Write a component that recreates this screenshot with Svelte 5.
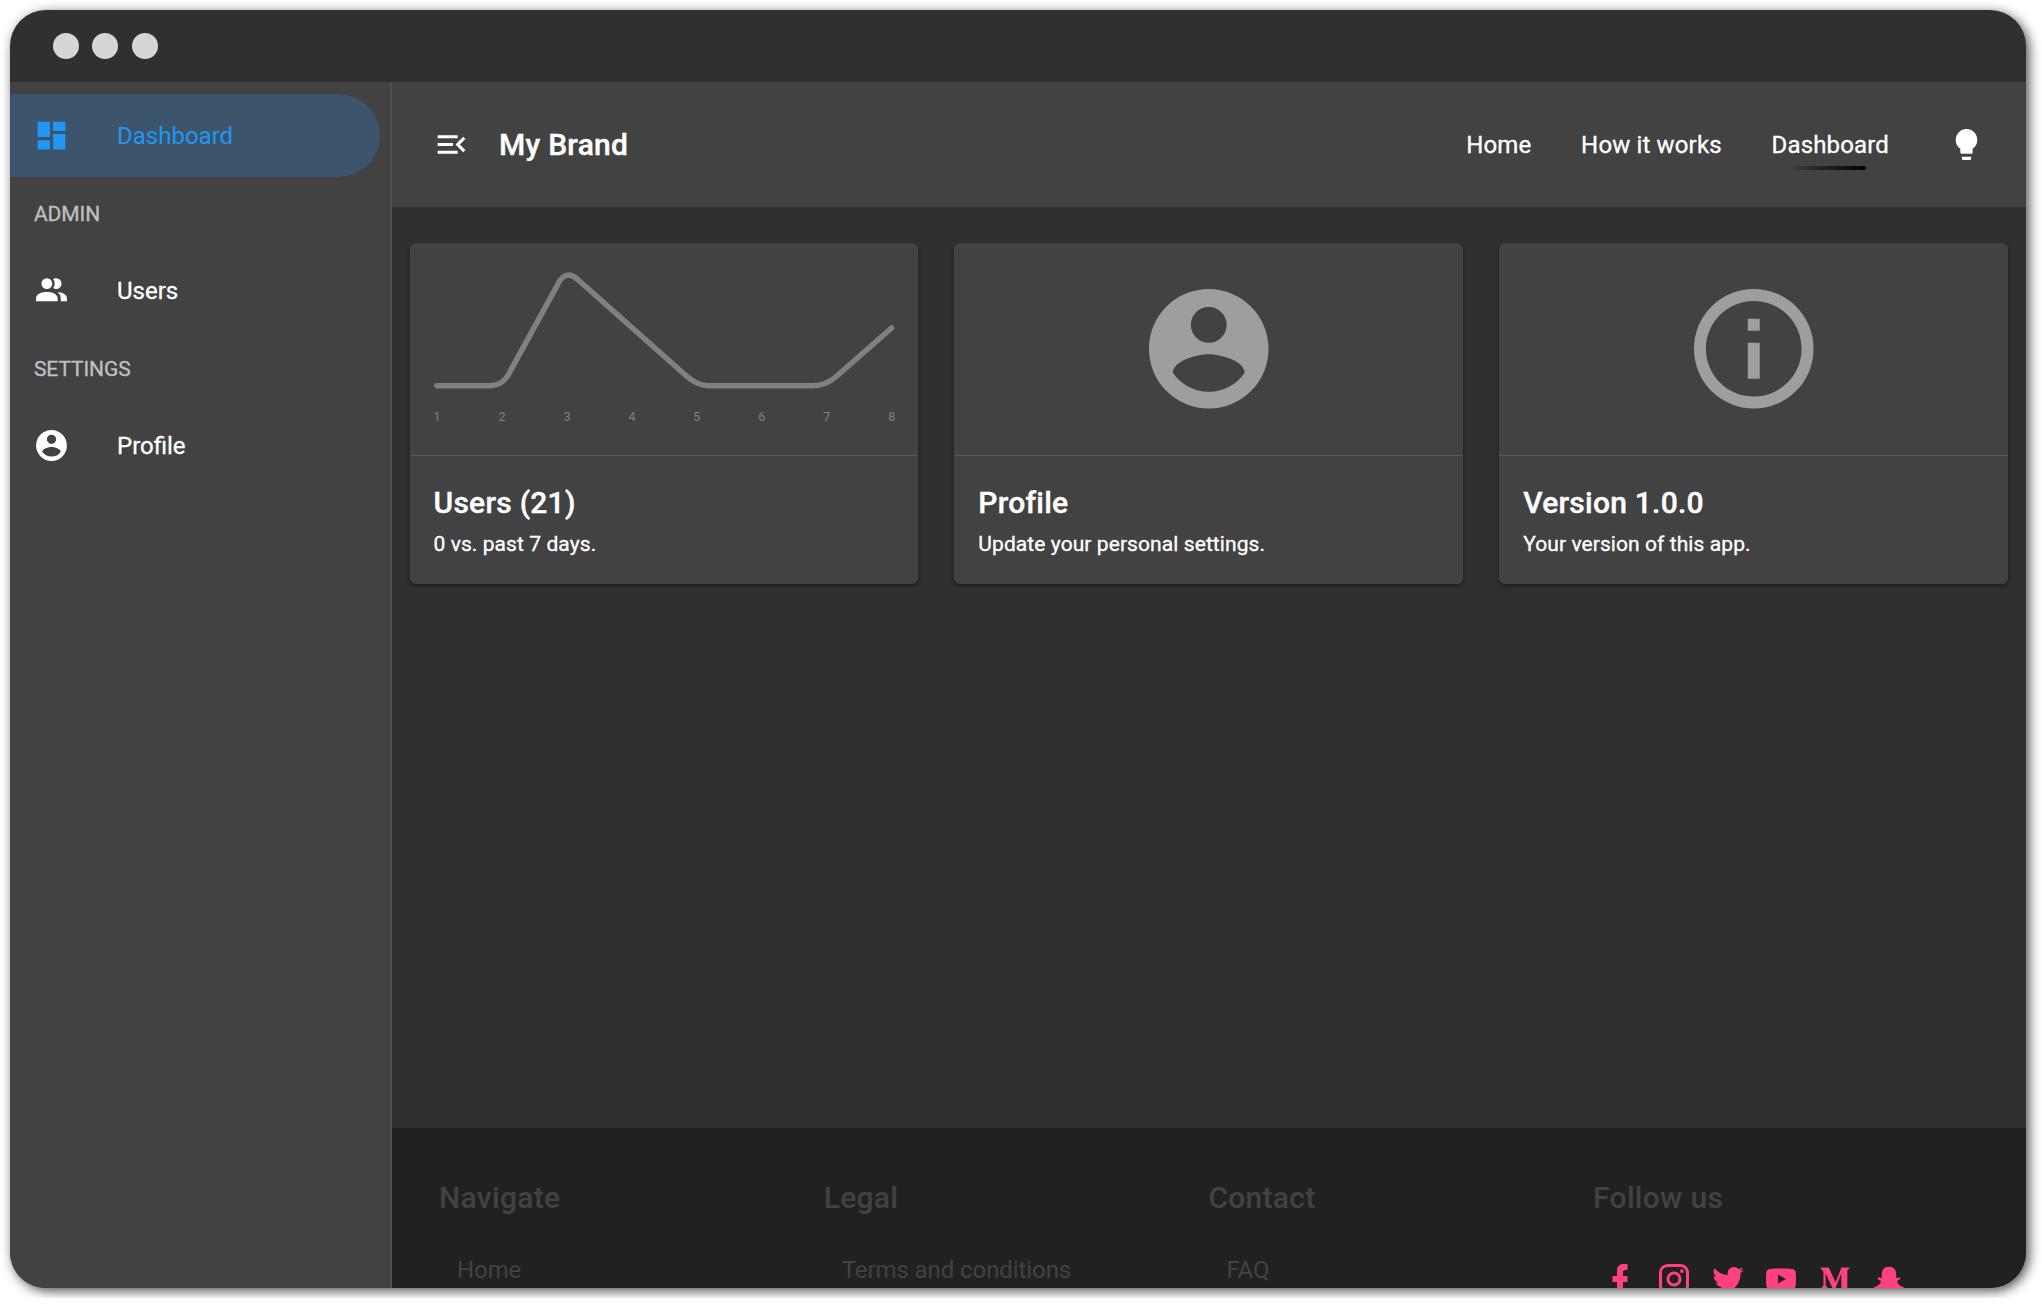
<script>
  const icons = {
    dashboard: 'M13 3v6h8V3m-8 18h8V11h-8M3 21h8v-6H3m0-2h8V3H3v10z',
    users: 'M16 17v2H2v-2s0-4 7-4 7 4 7 4m-3.5-9.5A3.5 3.5 0 1 0 9 11a3.5 3.5 0 0 0 3.5-3.5m3.44 5.5A5.32 5.32 0 0 1 18 17v2h4v-2s0-3.63-6.06-4M15 4a3.39 3.39 0 0 0-1.93.59 5 5 0 0 1 0 5.82A3.39 3.39 0 0 0 15 11a3.5 3.5 0 0 0 0-7z',
    account: 'M12 19.2c-2.5 0-4.71-1.28-6-3.2.03-2 4-3.1 6-3.1s5.97 1.1 6 3.1a7.232 7.232 0 0 1-6 3.2M12 5a3 3 0 0 1 3 3 3 3 0 0 1-3 3 3 3 0 0 1-3-3 3 3 0 0 1 3-3m0-3A10 10 0 0 0 2 12a10 10 0 0 0 10 10 10 10 0 0 0 10-10c0-5.53-4.5-10-10-10z',
    info: 'M11 9h2V7h-2m1 13c-4.41 0-8-3.59-8-8s3.59-8 8-8 8 3.59 8 8-3.59 8-8 8m0-18A10 10 0 0 0 2 12a10 10 0 0 0 10 10 10 10 0 0 0 10-10A10 10 0 0 0 12 2m-1 15h2v-6h-2v6z',
    menuOpen: 'M3 18h13v-2H3v2zM3 6v2h13V6H3zm0 7h10v-2H3v2zm18 2.59L17.42 12 21 8.41 19.59 7l-5 5 5 5L21 15.59z',
    bulb: 'M12 2a7 7 0 0 0-7 7c0 2.38 1.19 4.47 3 5.74V17a1 1 0 0 0 1 1h6a1 1 0 0 0 1-1v-2.26c1.81-1.27 3-3.36 3-5.74a7 7 0 0 0-7-7M9 21a1 1 0 0 0 1 1h4a1 1 0 0 0 1-1v-1H9v1z',
  };

  const sections = [
    { heading: null, items: [{ label: 'Dashboard', icon: icons.dashboard, active: true }] },
    { heading: 'ADMIN', items: [{ label: 'Users', icon: icons.users }] },
    { heading: 'SETTINGS', items: [{ label: 'Profile', icon: icons.account }] },
  ];

  const nav = [
    { label: 'Home' },
    { label: 'How it works' },
    { label: 'Dashboard', active: true },
  ];

  const cards = [
    { title: 'Users (21)', text: '0 vs. past 7 days.', chart: true },
    { title: 'Profile', text: 'Update your personal settings.', icon: icons.account },
    { title: 'Version 1.0.0', text: 'Your version of this app.', icon: icons.info },
  ];

  const days = [1, 2, 3, 4, 5, 6, 7, 8];

  const columns = [
    { title: 'Navigate', link: 'Home' },
    { title: 'Legal', link: 'Terms and conditions' },
    { title: 'Contact', link: 'FAQ' },
  ];

  const socials = [
    { name: 'Facebook', d: 'M17 2v4h-2c-.69 0-1 .81-1 1.5V10h3v4h-3v8h-4v-8H7v-4h3V6a4 4 0 0 1 4-4h3z' },
    { name: 'Instagram', d: 'M7.8,2H16.2C19.4,2 22,4.6 22,7.8V16.2A5.8,5.8 0 0,1 16.2,22H7.8C4.6,22 2,19.4 2,16.2V7.8A5.8,5.8 0 0,1 7.8,2M7.6,4A3.6,3.6 0 0,0 4,7.6V16.4C4,18.39 5.61,20 7.6,20H16.4A3.6,3.6 0 0,0 20,16.4V7.6C20,5.61 18.39,4 16.4,4H7.6M17.25,5.5A1.25,1.25 0 0,1 18.5,6.75A1.25,1.25 0 0,1 17.25,8A1.25,1.25 0 0,1 16,6.75A1.25,1.25 0 0,1 17.25,5.5M12,7A5,5 0 0,1 17,12A5,5 0 0,1 12,17A5,5 0 0,1 7,12A5,5 0 0,1 12,7M12,9A3,3 0 0,0 9,12A3,3 0 0,0 12,15A3,3 0 0,0 15,12A3,3 0 0,0 12,9Z' },
    { name: 'Twitter', d: 'M22.46,6C21.69,6.35 20.86,6.58 20,6.69C20.88,6.16 21.56,5.32 21.88,4.31C21.05,4.81 20.13,5.16 19.16,5.36C18.37,4.5 17.26,4 16,4C13.65,4 11.73,5.92 11.73,8.29C11.73,8.63 11.77,8.96 11.84,9.27C8.28,9.09 5.11,7.38 3,4.79C2.63,5.42 2.42,6.16 2.42,6.94C2.42,8.43 3.17,9.75 4.33,10.5C3.62,10.5 2.96,10.3 2.38,10V10.03C2.38,12.11 3.86,13.85 5.82,14.24C5.46,14.34 5.08,14.39 4.69,14.39C4.42,14.39 4.15,14.36 3.89,14.31C4.43,16 6,17.26 7.89,17.29C6.43,18.45 4.58,19.13 2.56,19.13C2.22,19.13 1.88,19.11 1.54,19.07C3.44,20.29 5.7,21 8.12,21C16,21 20.33,14.46 20.33,8.79C20.33,8.6 20.33,8.42 20.32,8.23C21.16,7.63 21.88,6.87 22.46,6Z' },
    { name: 'YouTube', d: 'M10 9v6l5.3-3L10 9M12 5c3 0 5.6.1 7.4.25 1.4.12 2.2.9 2.4 2.3.15 1.3.2 2.8.2 4.45s-.05 3.150-.2 4.450c-.2 1.4-1 2.180-2.400 2.300C17.600 18.900 15 19 12 19s-5.600-.1-7.400-.25c-1.400-.12-2.200-.9-2.400-2.300C2.050 15.150 2 13.650 2 12s.05-3.150.2-4.450c.2-1.400 1-2.180 2.400-2.300C6.400 5.100 9 5 12 5z' },
    { name: 'Medium', d: 'M2.300 4.300H7.900L12.400 14.300 16.300 4.300H21.700V4.800L20.200 6.300V17.800L21.700 19.300V19.800H14.600V19.300L16.200 17.800V8.400L11.700 19.800H11.100L5.800 8.400V16.200L7.800 18.800V19.800H2.300V18.800L4.300 16.200V7L2.300 4.800V4.300Z' },
    { name: 'Snapchat', d: 'M12 3.900c2.900 0 4.850 1.900 4.850 4.900l-.1 2.300c.6.35 1.200-.15 1.800-.15.600 0 1 .35 1 .75 0 .9-2.100 1-2.100 1.900 0 1.200 2 3.200 4 3.600.400.1.450.5.250.8-.5.750-1.700.85-2.800 1.100-.3.500-.1 1.100-.8 1.100s-1.600-.4-2.800-.1C14.200 20.500 13.500 21.500 12 21.500s-2.200-1-3.300-1.400c-1.200-.3-2.100.1-2.800.1s-.5-.6-.8-1.100c-1.100-.25-2.300-.35-2.800-1.100-.2-.3-.150-.7.250-.8 2-.4 4-2.400 4-3.600 0-.9-2.100-1-2.100-1.900 0-.4.400-.75 1-.75.600 0 1.200.5 1.800.15l-.1-2.300c0-3 1.950-4.900 4.850-4.900z' },
  ];
</script>

<div class="window">
  <div class="titlebar">
    <span class="dot"></span><span class="dot"></span><span class="dot"></span>
  </div>

  <div class="body">
    <aside>
      {#each sections as section}
        {#if section.heading}<h4>{section.heading}</h4>{/if}
        {#each section.items as item}
          <div class="item" class:active={item.active}>
            <svg class="icon" viewBox="0 0 24 24"><path d={item.icon} /></svg>
            <span>{item.label}</span>
          </div>
        {/each}
      {/each}
    </aside>

    <div class="content">
      <header>
        <svg class="icon" viewBox="0 0 24 24"><path d={icons.menuOpen} /></svg>
        <div class="brand">My Brand</div>
        <nav>
          {#each nav as link}
            <span class="link" class:current={link.active}>{link.label}</span>
          {/each}
        </nav>
        <svg class="icon" viewBox="0 0 24 24"><path d={icons.bulb} /></svg>
      </header>

      <main>
        {#each cards as card}
          <section class="card">
            <div class="media">
              {#if card.chart}
                <svg class="chart" viewBox="0 0 509 212">
                  <path d="M27 142.700H79C88 142.700 94.500 139 98.500 131.500L150 37.500C155 30.500 161 30.500 167.500 36.300L276.500 133C284 139.600 290 142.700 299 142.700H403C412 142.700 419.500 139.600 427 133L481.700 85" />
                  {#each days as day, i}
                    <text x={27 + i * 65} y="177.800">{day}</text>
                  {/each}
                </svg>
              {:else}
                <svg class="big" viewBox="0 0 24 24"><path d={card.icon} /></svg>
              {/if}
            </div>
            <div class="info">
              <h2>{card.title}</h2>
              <p>{card.text}</p>
            </div>
          </section>
        {/each}
      </main>

      <footer>
        {#each columns as column}
          <div class="column">
            <h3>{column.title}</h3>
            <div class="flink">{column.link}</div>
          </div>
        {/each}
        <div class="column">
          <h3>Follow us</h3>
          <div class="socials">
            {#each socials as social}
              <svg viewBox="0 0 24 24" aria-label={social.name}><path d={social.d} fill-rule="evenodd" /></svg>
            {/each}
          </div>
        </div>
      </footer>
    </div>
  </div>
</div>

<style>
  :global(body) {
    background: #fff;
  }
  .window {
    box-sizing: border-box;
    width: 2016px;
    height: 1278px;
    margin: 10px;
    border-radius: 36px;
    overflow: hidden;
    display: flex;
    flex-direction: column;
    background: #303030;
    box-shadow: 3px 3px 12px rgba(0, 0, 0, 0.7);
    font-family: Roboto, sans-serif;
    font-size: 24px;
    color: #fff;
  }
  h2, h3, h4, p {
    margin: 0;
  }
  svg {
    display: block;
    flex: none;
    fill: currentColor;
  }
  .icon {
    width: 37px;
    height: 37px;
  }
  .titlebar {
    flex: none;
    height: 72px;
    display: flex;
    align-items: center;
    gap: 13px;
    padding-left: 43px;
  }
  .dot {
    width: 26px;
    height: 26px;
    border-radius: 50%;
    background: #d6d6d6;
  }
  .dot:last-child {
    margin-left: 1px;
  }
  .body {
    flex: 1;
    min-height: 0;
    display: flex;
  }
  aside {
    box-sizing: border-box;
    flex: none;
    width: 382px;
    padding: 12px 10px 0 0;
    background: #424242;
    border-right: 2px solid #4f4f4f;
  }
  .item {
    display: flex;
    align-items: center;
    gap: 47px;
    height: 83px;
    padding-left: 23px;
    border-radius: 0 42px 42px 0;
    -webkit-text-stroke: 0.3px currentColor;
  }
  .item.active {
    background: #3c556b;
    color: #2196f3;
    -webkit-text-stroke: 0;
  }
  h4 {
    height: 72px;
    line-height: 75px;
    padding-left: 24px;
    font-size: 21px;
    font-weight: 400;
    letter-spacing: -0.1px;
    color: #c0c0c0;
    -webkit-text-stroke: 0.3px currentColor;
  }
  .content {
    flex: 1;
    min-width: 0;
    display: flex;
    flex-direction: column;
  }
  header {
    box-sizing: border-box;
    flex: none;
    height: 125px;
    display: flex;
    align-items: center;
    padding: 0 41px;
    background: #424242;
  }
  .brand {
    margin: 0 0 1px 29px;
    font-size: 30px;
    font-weight: 500;
    letter-spacing: 0.25px;
    -webkit-text-stroke: 0.4px currentColor;
  }
  nav {
    display: flex;
    gap: 49.800px;
    margin: 1px 59px 0 auto;
    letter-spacing: 0.15px;
    -webkit-text-stroke: 0.3px currentColor;
  }
  .link {
    position: relative;
  }
  .current::after {
    content: '';
    position: absolute;
    left: 19%;
    right: 20%;
    bottom: -11px;
    height: 4px;
    border-radius: 2px;
    background: linear-gradient(90deg, rgba(0, 0, 0, 0.15), #000);
  }
  main {
    flex: 1;
    display: grid;
    grid-template-columns: repeat(3, 1fr);
    align-items: start;
    gap: 36px;
    padding: 36px 18px 0 17.500px;
  }
  .card {
    border-radius: 6px;
    background: #424242;
    box-shadow: 0 2px 4px rgba(0, 0, 0, 0.4);
  }
  .media {
    height: 212px;
    display: flex;
    align-items: center;
    justify-content: center;
    border-bottom: 1px solid #5a5a5a;
    color: #9e9e9e;
  }
  .big {
    width: 143.500px;
    height: 143.500px;
  }
  .chart {
    width: 100%;
    height: 212px;
  }
  .chart path {
    fill: none;
    stroke: #808080;
    stroke-width: 5.500px;
    stroke-linecap: round;
  }
  .chart text {
    font-size: 12.500px;
    text-anchor: middle;
    fill: #808080;
  }
  .info {
    box-sizing: border-box;
    height: 128px;
    padding: 27px 24px 0;
  }
  h2 {
    font-size: 30px;
    line-height: 40px;
    font-weight: 500;
    letter-spacing: 0.25px;
    -webkit-text-stroke: 0.4px currentColor;
  }
  p {
    font-size: 21px;
    line-height: 42px;
    letter-spacing: 0.08px;
    -webkit-text-stroke: 0.3px currentColor;
  }
  footer {
    flex: none;
    box-sizing: border-box;
    height: 160px;
    display: grid;
    grid-template-columns: repeat(4, 384.700px);
    align-items: start;
    padding: 49px 0 0 47px;
    background: #212121;
    color: #424242;
    overflow: hidden;
  }
  h3 {
    font-size: 30px;
    line-height: 42px;
    font-weight: 500;
    letter-spacing: 0.3px;
  }
  .flink {
    margin-top: 37px;
    padding-left: 18px;
    line-height: 28px;
    letter-spacing: -0.08px;
  }
  .socials {
    display: flex;
    gap: 17.800px;
    margin-top: 42px;
    padding-left: 9px;
    color: #ff4081;
  }
  .socials svg {
    width: 36px;
    height: 36px;
  }
</style>
